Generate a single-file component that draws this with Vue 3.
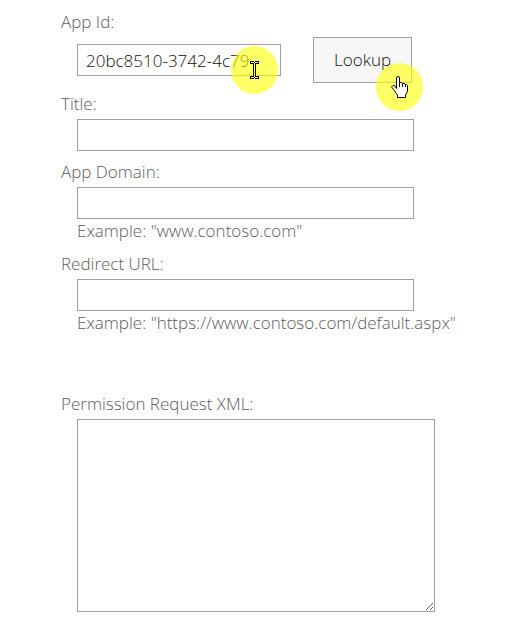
<script setup>
import { ref } from 'vue'

const appId = ref('20bc8510-3742-4c79-')
const title = ref('')
const domain = ref('')
const redirect = ref('')
const xml = ref('')
</script>

<template>
  <form class="form" @submit.prevent>
    <div class="group">
      <label for="app-id">App Id:</label>
      <div class="lookup">
        <div class="id-box">
          <input id="app-id" v-model="appId" class="field" type="text" />
          <span class="spot spot-text">
            <svg width="9" height="18" viewBox="0 0 9 18" shape-rendering="crispEdges" aria-hidden="true">
              <path d="M0 0h4v1h1V0h4v3H6v12h3v3H5v-1H4v1H0v-3h3V3H0z" fill="#000" />
              <path d="M1 1h3v1H1zM5 1h3v1H5zM4 2h1v14H4zM1 16h3v1H1zM5 16h3v1H5z" fill="#ffff66" />
            </svg>
          </span>
        </div>
        <div class="button-box">
          <button type="button">Lookup</button>
          <span class="spot spot-hand">
            <svg width="17" height="22" viewBox="0 0 17 22" aria-hidden="true">
              <path d="M5.500 12.500V2Q5.500.5 7 .5T8.500 2v4.500h2l1 1h2l1 1h1l1 1v6l-2 3.500v2.500h-8V19l-2-2.500-1-2-2.500-3V10.500l1-1h1.500z" fill="#fff" stroke="#000" stroke-linejoin="round" />
              <path d="M8.500 6.500V11M11.500 7.500V11M14.500 8.500V11" stroke="#000" fill="none" />
            </svg>
          </span>
        </div>
      </div>
    </div>

    <div class="group">
      <label for="title">Title:</label>
      <input id="title" v-model="title" class="field inset" type="text" />
    </div>

    <div class="group">
      <label for="domain">App Domain:</label>
      <input id="domain" v-model="domain" class="field inset" type="text" aria-describedby="domain-hint" />
      <p id="domain-hint">Example: "www.contoso.com"</p>
    </div>

    <div class="group">
      <label for="redirect">Redirect URL:</label>
      <input id="redirect" v-model="redirect" class="field inset" type="text" aria-describedby="redirect-hint" />
      <p id="redirect-hint">Example: "https://www.contoso.com/default.aspx"</p>
    </div>

    <div class="group request">
      <label for="xml">Permission Request XML:</label>
      <textarea id="xml" v-model="xml" class="inset"></textarea>
    </div>
  </form>
</template>

<style>
body {
  margin: 0;
  background: #fff;
}
</style>

<style scoped>
.form {
  display: flex;
  flex-direction: column;
  gap: 9px;
  padding: 10px 16px 16px 61px;
  color: #5c5c5c;
  font: 300 17px/24px "Segoe UI", "Open Sans", "Noto Sans", sans-serif;
}

.group {
  display: flex;
  flex-direction: column;
  align-items: flex-start;
}

label {
  margin-bottom: 3px;
}

.lookup {
  display: flex;
  align-items: center;
  gap: 32px;
  margin-left: 16px;
}

.id-box,
.button-box {
  position: relative;
  display: flex;
}

.id-box {
  width: 204px;
}

.field {
  box-sizing: border-box;
  width: 100%;
  height: 32px;
  padding: 0 8px;
  border: 1px solid #a0a0a0;
  border-radius: 0;
  background: #fff;
  color: #111;
  font: inherit;
}

.inset {
  max-width: 337px;
  margin-left: 16px;
}

button {
  height: 46px;
  padding: 0 20px;
  border: 1px solid #a0a0a0;
  border-radius: 0;
  background: #f7f7f7;
  color: #111;
  font: inherit;
}

p {
  margin: 0 0 0 16px;
  white-space: nowrap;
}

.request {
  margin-top: 48px;
}

textarea {
  box-sizing: border-box;
  width: 100%;
  height: 193px;
  padding: 8px;
  border: 1px solid #a0a0a0;
  border-radius: 0;
  background: #fff;
  color: #111;
  font: inherit;
  resize: both;
}

textarea.inset {
  max-width: 358px;
}

.spot {
  position: absolute;
  display: grid;
  place-items: center;
  width: 47px;
  height: 48px;
  border-radius: 50%;
  background: rgba(255, 255, 0, 0.6);
  pointer-events: none;
}

.spot-text {
  top: 2px;
  right: 3px;
}

.spot-hand {
  top: 26px;
  right: -11px;
}
</style>
